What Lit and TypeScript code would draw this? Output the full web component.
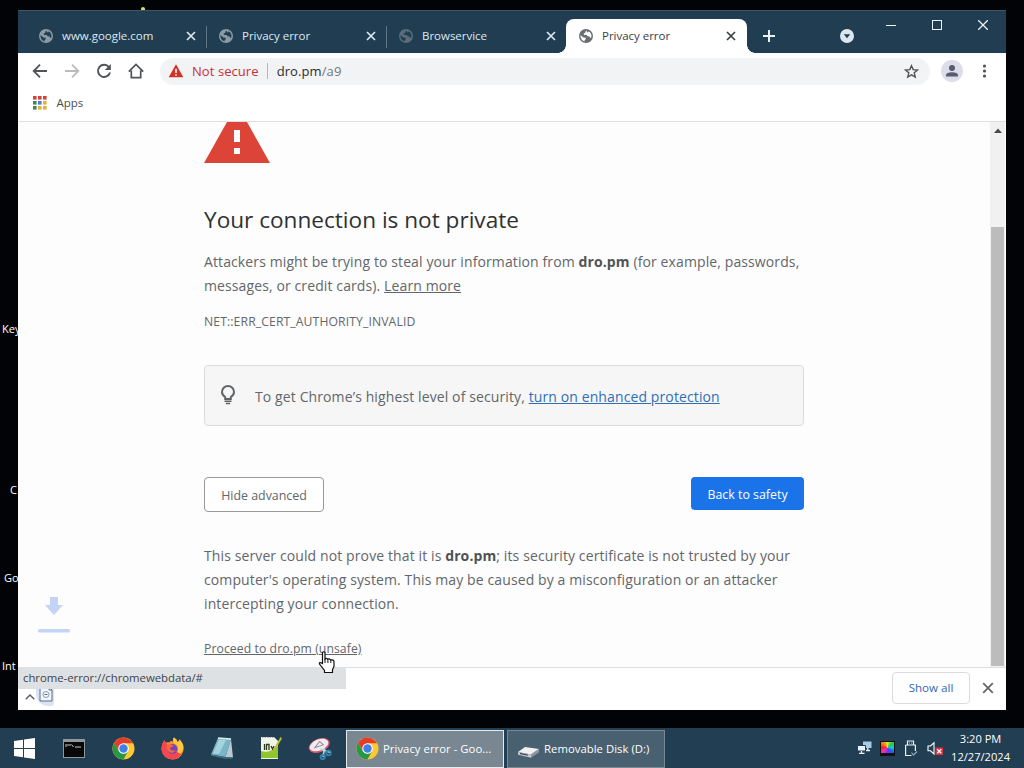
import { LitElement, html, css, svg } from "lit";
import { customElement, property } from "lit/decorators.js";

const globe = html`<svg width="14" height="14" viewBox="0 0 14 14">
  <circle cx="7" cy="7" r="7" fill="currentColor" />
  <path
    class="land"
    d="M7.6 1.5 L6.3 2.8 L6.3 4 L4.8 4.3 L4.8 5.7 L7.8 5.9 L8.6 7.3 L10.6 7.5 L11.3 9 L12.3 8.4 Q13.1 4.4 9.8 2.2 L9.2 3.2 L8 3.2 Z M1.4 6 L4.4 8.4 L6.6 8.7 L6.8 10.3 L5.6 10.9 L5.7 12.5 Q1.3 11.2 1.4 6 Z"
  />
</svg>`;

const chromeLogo = html`<svg width="23" height="23" viewBox="0 0 48 48">
  <circle cx="24" cy="24" r="23" fill="#fcc934" />
  <path d="M4.1 12.5 A23 23 0 0 1 43.9 13 L24 13 L14.5 18.5 L14.5 29.5 Z" fill="#e33b2e" />
  <path d="M4.1 12.5 L14.5 29.5 L24 35 L33.5 29.5 L24 47 A23 23 0 0 1 4.1 12.5 Z" fill="#279847" />
  <circle cx="24" cy="24" r="11" fill="#fff" />
  <circle cx="24" cy="24" r="8.8" fill="#3f7fe8" />
</svg>`;

const cross = (size: number, width: number) => html`<svg
  width=${size}
  height=${size}
  viewBox="0 0 10 10"
>
  <path
    d="M1 1 L9 9 M9 1 L1 9"
    stroke="currentColor"
    stroke-width=${width}
    fill="none"
  />
</svg>`;

@customElement("browser-tab")
class BrowserTab extends LitElement {
  @property() label = "";
  @property({ type: Boolean, reflect: true }) active = false;
  @property({ type: Boolean, reflect: true }) divider = false;
  @property({ type: Boolean, reflect: true }) loading = false;

  static styles = css`
    :host {
      display: flex;
      align-items: center;
      box-sizing: border-box;
      position: relative;
      width: 180px;
      height: 34px;
      padding: 0 10px 0 13px;
      color: #dbe9f1;
    }
    :host([active]) {
      width: 181px;
      padding-right: 11px;
      background: #fff;
      border-radius: 8px 8px 0 0;
      color: #3c4043;
    }
    /* the feet that flare out into the toolbar */
    :host([active])::before,
    :host([active])::after {
      content: "";
      position: absolute;
      bottom: 0;
      width: 8px;
      height: 8px;
    }
    :host([active])::before {
      left: -8px;
      background: radial-gradient(circle at 0 0, transparent 7.5px, #fff 8px);
    }
    :host([active])::after {
      right: -8px;
      background: radial-gradient(circle at 100% 0, transparent 7.5px, #fff 8px);
    }
    .icon {
      display: flex;
      color: #8b9aa3;
    }
    .land {
      fill: #213d51;
    }
    :host([loading]) .icon {
      color: #5b6d7a;
    }
    :host([active]) .icon {
      color: #6a6d71;
    }
    :host([active]) .land {
      fill: #fff;
    }
    .label {
      flex: 1;
      margin-left: 9px;
      padding-bottom: 2px;
      font-size: 11.5px;
      letter-spacing: -0.02px;
      white-space: nowrap;
    }
    .divider {
      position: absolute;
      right: -1px;
      top: 7px;
      width: 1px;
      height: 22px;
      background: #5f7584;
    }
  `;

  render() {
    return html`
      <span class="icon">${globe}</span>
      <span class="label">${this.label}</span>
      ${cross(10, 1.7)}
      ${this.divider ? html`<span class="divider"></span>` : null}
    `;
  }
}

@customElement("browser-toolbar")
class BrowserToolbar extends LitElement {
  static styles = css`
    :host {
      display: block;
      background: #fff;
      border-bottom: 1px solid #dcdee0;
    }
    svg {
      display: block;
    }
    .row {
      display: flex;
      align-items: center;
      height: 36px;
      padding: 0 12px 0 14px;
      color: #505357;
    }
    .nav {
      display: flex;
      gap: 16px;
    }
    .off {
      color: #b9bbbe;
    }
    .nav svg {
      width: 16px;
      height: 16px;
    }
    .omnibox {
      flex: 1;
      display: flex;
      align-items: center;
      box-sizing: border-box;
      height: 27px;
      margin: 0 11px 0 16px;
      padding: 0 11px 0 8px;
      border-radius: 14px;
      background: #f2f3f4;
      font-size: 13px;
    }
    .danger {
      margin-left: 8px;
      color: #c5303c;
      letter-spacing: 0.07px;
    }
    .bar {
      width: 1px;
      height: 16px;
      margin: 0 9px 0 8px;
      background: #b5b8bb;
    }
    .url {
      flex: 1;
      color: #2b2d30;
      letter-spacing: 0.1px;
    }
    .path {
      color: #74777b;
    }
    .avatar {
      margin-right: 13px;
    }
    .bookmarks {
      display: flex;
      align-items: center;
      gap: 10px;
      box-sizing: border-box;
      height: 32px;
      padding: 0 15px 5px 14.5px;
      font-size: 11.5px;
      color: #4a4d51;
    }
  `;

  render() {
    const colors = [
      "#d0453b", "#d0453b", "#d0453b",
      "#3e8a57", "#4a7fc9", "#e0b13c",
      "#3e8a57", "#e0b13c", "#e0b13c",
    ];
    return html`
      <div class="row">
        <div class="nav">
          <svg viewBox="0 0 16 16" fill="none" stroke="currentColor" stroke-width="1.8">
            <path d="M15 8 H2 M8 1.7 L1.7 8 L8 14.3" />
          </svg>
          <svg class="off" viewBox="0 0 16 16" fill="none" stroke="currentColor" stroke-width="1.8">
            <path d="M1 8 H14 M8 1.7 L14.3 8 L8 14.3" />
          </svg>
          <svg viewBox="0 0 16 16" fill="none" stroke="currentColor" stroke-width="1.9">
            <path d="M13 4.2 A6.1 6.1 0 1 0 14 9.5" />
            <path d="M14.8 1 V7 H8.8 Z" fill="currentColor" stroke="none" />
          </svg>
          <svg viewBox="0 0 16 16" fill="none" stroke="currentColor" stroke-width="1.7">
            <path d="M3.3 7.5 V14.6 H12.7 V7.5 M0.8 8.6 L8 1.4 L15.2 8.6" />
          </svg>
        </div>
        <div class="omnibox">
          <svg width="16" height="14" viewBox="0 0 16 14">
            <path d="M8 0.3 L15.3 13.3 H0.7 Z" fill="#d32f27" />
            <path d="M7.2 4.8 H8.8 V9 H7.2 Z M7.2 10.2 H8.8 V11.8 H7.2 Z" fill="#fff" />
          </svg>
          <span class="danger">Not secure</span>
          <span class="bar"></span>
          <span class="url">dro.pm<span class="path">/a9</span></span>
          <svg width="15" height="15" viewBox="0 0 16 16" fill="none" stroke="currentColor" stroke-width="1.5">
            <path d="M8 1.8 L9.8 6 L14.4 6.4 L10.9 9.4 L12 13.9 L8 11.5 L4 13.9 L5.1 9.4 L1.6 6.4 L6.2 6 Z" />
          </svg>
        </div>
        <svg class="avatar" width="22" height="22" viewBox="0 0 22 22">
          <circle cx="11" cy="11" r="11" fill="#dcdde8" />
          <circle cx="11" cy="8" r="3" fill="#595b70" />
          <path d="M5 16.5 V15 Q5.5 12.2 11 12.2 Q16.5 12.2 17 15 V16.5 Z" fill="#595b70" />
        </svg>
        <svg width="18" height="16" viewBox="0 0 18 16" fill="currentColor">
          <circle cx="8.5" cy="3" r="1.6" />
          <circle cx="8.5" cy="8" r="1.6" />
          <circle cx="8.5" cy="13" r="1.6" />
        </svg>
      </div>
      <div class="bookmarks">
        <svg width="14" height="14" viewBox="0 0 14 14">
          ${colors.map(
            (c, i) => svg`<rect x=${(i % 3) * 5} y=${Math.floor(i / 3) * 5} width="3.6" height="3.6" fill=${c} />`
          )}
        </svg>
        <span>Apps</span>
      </div>
    `;
  }
}

@customElement("privacy-error")
class PrivacyError extends LitElement {
  static styles = css`
    :host {
      display: flex;
      height: 545px;
      background: #fdfdfd;
      color: #63666a;
    }
    svg {
      display: block;
    }
    .page {
      flex: 1;
      display: flex;
      justify-content: center;
    }
    .content {
      width: 600px;
      white-space: nowrap;
    }
    h1 {
      margin: 40px 0 13px;
      font-size: 22.6px;
      line-height: 34px;
      font-weight: 400;
      color: #2f3134;
    }
    p {
      margin: 0;
      font-size: 14px;
      line-height: 24px;
      letter-spacing: 0.11px;
    }
    b {
      font-weight: 700;
      color: #505255;
    }
    .link {
      text-decoration: underline;
    }
    .code {
      margin-top: 14px;
      font-size: 12.2px;
      line-height: 20px;
    }
    .promo {
      display: flex;
      align-items: center;
      box-sizing: border-box;
      height: 61px;
      margin-top: 33px;
      padding: 1px 16px 0;
      border: 1px solid #dadce0;
      border-radius: 4px;
      background: #f6f6f7;
      font-size: 14px;
      letter-spacing: 0.11px;
    }
    .promo svg {
      margin: -3px 18px 0 -1px;
    }
    .tip {
      margin-left: 1px;
    }
    .blue {
      color: #2f6fb8;
      text-decoration: underline;
    }
    .buttons {
      display: flex;
      align-items: flex-start;
      justify-content: space-between;
      margin: 51px 0 32px;
    }
    .btn {
      display: flex;
      align-items: center;
      justify-content: center;
      box-sizing: border-box;
      border-radius: 4px;
      font-size: 12.4px;
    }
    .hide {
      width: 120px;
      height: 35px;
      padding-top: 1px;
      border: 1px solid #97999c;
      background: #fff;
    }
    .back {
      width: 113px;
      height: 33px;
      padding-top: 1px;
      background: #1a73e8;
      color: #fff;
    }
    .proceed {
      margin-top: 21px;
      font-size: 12.2px;
      letter-spacing: 0.09px;
    }
    .scrollbar {
      box-sizing: border-box;
      width: 16px;
      padding: 6px 2px 0;
      background: #f1f1f1;
      border-right: 1px solid #fff;
    }
    .thumb {
      height: 439px;
      margin: 94px -1px 0;
      background: #bcbcbc;
    }
    .scrollbar svg {
      margin: 0 auto;
    }
  `;

  render() {
    return html`
      <div class="page">
        <div class="content">
          <svg width="66" height="41" viewBox="0 0 66 41">
            <path d="M23 0 H43 L66 41 H0 Z" fill="#db4437" />
            <path d="M30 8 H36 V20 H30 Z M30 26 H36 V32 H30 Z" fill="#fff" />
          </svg>
          <h1>Your connection is not private</h1>
          <p>
            Attackers might be trying to steal your information from
            <b>dro.pm</b> (for example, passwords,<br />messages, or credit
            cards). <span class="link">Learn more</span>
          </p>
          <p class="code">NET::ERR_CERT_AUTHORITY_INVALID</p>
          <div class="promo">
            <svg width="16" height="20" viewBox="0 0 16 20" fill="none" stroke="#606468" stroke-width="2">
              <path d="M5.2 14 V12 Q2 10.2 2 7 A6 6 0 0 1 14 7 Q14 10.2 10.8 12 V14 Z" />
              <path d="M4.5 16.2 H11.5 M5.8 18.6 H10.2" stroke-width="1.5" />
            </svg>
            <span class="tip">To get Chrome’s highest level of security, <span class="blue">turn on enhanced protection</span></span>
          </div>
          <div class="buttons">
            <span class="btn hide">Hide advanced</span>
            <span class="btn back">Back to safety</span>
          </div>
          <p>
            This server could not prove that it is <b>dro.pm</b>; its security
            certificate is not trusted by your<br />computer's operating system.
            This may be caused by a misconfiguration or an attacker<br />intercepting
            your connection.
          </p>
          <p class="proceed"><span class="link">Proceed to dro.pm (unsafe)</span></p>
        </div>
      </div>
      <div class="scrollbar">
        <svg width="8" height="5" viewBox="0 0 8 5"><path d="M0 5 L4 0.5 L8 5 Z" fill="#4a4a4a" /></svg>
        <div class="thumb"></div>
      </div>
    `;
  }
}

@customElement("task-bar")
class TaskBar extends LitElement {
  static styles = css`
    :host {
      display: flex;
      align-items: center;
      height: 40px;
      background: #213e53;
      color: #fff;
      font-size: 11.3px;
      white-space: nowrap;
    }
    svg {
      display: block;
    }
    .pinned {
      display: flex;
      width: 346px;
    }
    .pin {
      display: flex;
      align-items: center;
      justify-content: center;
      width: 49.3px;
    }
    .task {
      display: flex;
      align-items: center;
      box-sizing: border-box;
      gap: 4px;
      width: 158px;
      height: 38px;
      margin: 1px 3px 0 0;
      padding-left: 9px;
      border: 1px solid #768995;
      background: #486070;
    }
    .task.current {
      border-color: #e6eaed;
      background: #788791;
    }
    .name {
      padding-bottom: 1px;
      letter-spacing: 0.04px;
    }
    .disk {
      margin-top: 5px;
    }
    .tray {
      display: flex;
      align-items: center;
      gap: 8px;
      margin-left: auto;
      margin-right: 14px;
    }
    .screen {
      width: 13px;
      height: 11px;
      border: 1px solid #111;
      border-bottom-width: 3px;
      background: conic-gradient(
        from 0deg,
        #e8e820,
        #20d040,
        #18c8d8,
        #2858f0,
        #8030f0,
        #f030c0,
        #f02828,
        #f08820,
        #e8e820
      );
    }
    .clock {
      font-size: 11.1px;
      text-align: center;
      line-height: 18px;
    }
  `;

  render() {
    return html`
      <div class="pinned">
        <span class="pin">
          <svg width="21" height="21" viewBox="0 0 21 21" fill="#fff">
            <path d="M0 3 L9 1.7 V10 H0 Z M10 1.5 L21 0 V10 H10 Z M0 11 H9 V19.3 L0 18 Z M10 11 H21 V21 L10 19.5 Z" />
          </svg>
        </span>
        <span class="pin">
          <svg width="22" height="19" viewBox="0 0 22 19">
            <rect width="22" height="19" fill="#8f979b" />
            <rect x="1" y="3" width="20" height="15" fill="#080808" />
            <path d="M3 5 V8 M5 5 V7 M7 5 V7 M8.5 5.5 L10.5 8 M12 8 H18" stroke="#c8c8c8" stroke-width="1" />
          </svg>
        </span>
        <span class="pin">${chromeLogo}</span>
        <span class="pin">
          <svg width="23" height="23" viewBox="0 0 23 23">
            <path d="M13 0.5 Q16 2 16.5 5 Q18.5 4.5 18.3 2.2 Q24.5 8 22 15 Q19 22.5 11.5 22.5 Q2.5 22 0.7 13.5 Q-0.2 7.5 3.6 3 Q3.8 5 5.2 5.6 Q7 5 8.5 5.2 Q9.8 3.3 12 4.5 Q11.5 2 13 0.5 Z" fill="#fb8b2c" />
            <path d="M3.6 3 Q3.8 5 5.2 5.6 L7 9 L10 12 L20 17 Q17 22.5 11.5 22.5 Q2.5 22 0.7 13.5 Q-0.2 7.5 3.6 3 Z" fill="#f4474f" />
            <path d="M13 0.5 Q16 2 16.5 5 Q18.5 4.5 18.3 2.2 Q24 8 21.5 14 Q19 18 16.5 15 Q19 9 12.5 6 Q11.3 2 13 0.5 Z" fill="#ffc83d" />
            <circle cx="11.5" cy="12" r="4.9" fill="#7146be" />
            <path d="M5.5 8.5 Q9 6 12.5 8.5 Q12 10 9.5 10.2 L9 12 Q11 14.5 15 13 Q12 18 7.5 14.5 Q5 12 5.5 8.5 Z" fill="#f5673a" />
          </svg>
        </span>
        <span class="pin">
          <svg width="24" height="22" viewBox="0 0 24 22">
            <path d="M8 1 L21 2 L15.5 20 L1 17.5 Z" fill="#78b5c6" />
            <path d="M9 2.5 L16 3 L9 17 L3 16.5 Z" fill="#a5d2dc" />
            <path d="M21 2 L23 20.5 L15.5 20 Z" fill="#b8cbd0" />
            <path d="M1 17.5 L15.5 20 L23 20.5 L22 21.7 L14 21.5 L1 18.8 Z" fill="#3f7183" />
            <path d="M8 1 L21 2" stroke="#d9edf0" stroke-width="1.5" />
          </svg>
        </span>
        <span class="pin">
          <svg width="22" height="24" viewBox="0 0 22 24">
            <path d="M1 1 H14 L18 5 V23 H1 Z" fill="#f1f5e9" />
            <path d="M1 15 Q9 18 18 10 V22 H1 Z" fill="#8fc62c" />
            <path d="M4.5 8 V14 M6.5 14 V8.5 H9 V14 M11 10 L12.5 13 L14 10" stroke="#2d3a1a" stroke-width="1.3" fill="none" />
            <path d="M20.5 1 L13 14 L11.5 17 L14.5 15 L22 2.5 Z" fill="#b9bc2b" />
            <path d="M2 1.5 H14" stroke="#a5b1ad" stroke-dasharray="1.5 1" />
          </svg>
        </span>
        <span class="pin">
          <svg width="24" height="23" viewBox="0 0 24 23">
            <g transform="rotate(-22 11 8)">
              <ellipse cx="11" cy="8.5" rx="11" ry="6.8" fill="#d95771" />
              <ellipse cx="11" cy="8" rx="9.7" ry="5.6" fill="#f4e9ec" />
              <path d="M6 9 L13 5 L15 9.5 Z" fill="none" stroke="#809098" />
            </g>
            <path d="M12 12 L22.5 15.5 M16.5 11 L15 20" stroke="#bdd7e0" stroke-width="1.6" />
            <circle cx="20.5" cy="16" r="2.3" fill="none" stroke="#3384ad" stroke-width="1.8" />
            <circle cx="14.7" cy="20" r="2.2" fill="none" stroke="#3384ad" stroke-width="1.8" />
          </svg>
        </span>
      </div>
      <div class="task current">${chromeLogo}<span class="name">Privacy error - Goo...</span></div>
      <div class="task">
        <svg class="disk" width="23" height="14" viewBox="0 0 23 14">
          <path d="M1 8 L8 3 L22 5 L14 10.5 Z" fill="#eef0f1" />
          <path d="M1 8 L14 10.5 V13.8 L1 10.8 Z" fill="#c3c9cc" />
          <path d="M14 10.5 L22 5 V8.3 L14 13.8 Z" fill="#8e989e" />
          <path d="M3 9.5 L11 11.2" stroke="#4b555b" stroke-width="1.3" />
        </svg>
        <span class="name">Removable Disk (D:)</span>
      </div>
      <div class="tray">
        <svg width="15" height="14" viewBox="0 0 15 14">
          <path d="M6 0.5 H14.5 V7 H6 Z" fill="#a6cde6" />
          <path d="M0.5 4.5 H8.5 V10 H0.5 Z" fill="#e8f2f8" stroke="#213e53" />
          <path d="M2 12.3 H7.5 M4.5 10 V12 M10.8 7 V9.5 M9 9.5 H13" stroke="#e8f2f8" stroke-width="1.3" />
        </svg>
        <span class="screen"></span>
        <svg width="16" height="17" viewBox="0 0 16 17" fill="none" stroke="#e9eff3" stroke-width="1.2">
          <path d="M4.5 5 V1 H10.5 V5 M2.6 5 H12.4 V11 M2.6 5 V15.5 H8.5" />
          <path d="M6 3 H6.8 M8.3 3 H9.1" />
          <path d="M8.5 12.5 L10.5 15 L14 11.5" stroke="#8fa7b6" />
        </svg>
        <svg width="16" height="15" viewBox="0 0 16 15">
          <path d="M1 5 H3.5 L7 1.8 V13 L3.5 9.8 H1 Z" fill="none" stroke="#fff" stroke-width="1.1" />
          <rect x="8.5" y="6.5" width="7.5" height="7.5" fill="#dc3340" />
          <path d="M10.2 8.2 L14.3 12.3 M14.3 8.2 L10.2 12.3" stroke="#fff" stroke-width="1.3" />
        </svg>
        <div class="clock">3:20 PM<br />12/27/2024</div>
      </div>
    `;
  }
}

@customElement("app-root")
class AppRoot extends LitElement {
  static styles = css`
    :host {
      display: flex;
      flex-direction: column;
      width: 1024px;
      height: 768px;
      overflow: hidden;
      font-family: "Open Sans", "Noto Sans", sans-serif;
    }
    svg {
      display: block;
    }
    .desktop {
      position: relative;
      flex: 1;
      overflow: hidden;
      background: #020307;
    }
    .shortcut {
      position: absolute;
      left: 2px;
      color: #fff;
      font-size: 11px;
      line-height: 16px;
    }
    .s1 {
      top: 321px;
    }
    .s2 {
      top: 482px;
      left: 10px;
    }
    .s3 {
      top: 570px;
      left: 4px;
    }
    .s4 {
      top: 658px;
    }
    .spark {
      position: absolute;
      left: 141px;
      top: 7px;
      width: 4px;
      height: 4px;
      border-radius: 50% 50% 0 0;
      background: #d9dc6c;
    }
    .window {
      position: absolute;
      left: 18px;
      top: 10px;
      display: flex;
      flex-direction: column;
      width: 988px;
      height: 700px;
      background: #fff;
    }
    .tabs {
      display: flex;
      box-sizing: border-box;
      height: 43px;
      padding: 8px 18px 0 8px;
      border-top: 1px solid #3c5768;
      background: #213d51;
      color: #e9f2f6;
    }
    .plus {
      margin: 11px 0 0 16px;
    }
    .search {
      margin: 10px 32px 0 auto;
    }
    .controls {
      display: flex;
      gap: 36px;
      margin-top: 1px;
    }
    .shelf {
      display: flex;
      align-items: center;
      box-sizing: border-box;
      height: 43px;
      padding: 0 12px 2px 7px;
      border-top: 1px solid #dcdee0;
      color: #5f6368;
    }
    .file {
      display: flex;
      align-items: center;
      margin: 16px auto 0 0;
    }
    .chip {
      margin-left: 1px;
      padding: 0 1px 4px 3px;
      background: #dbe4f5;
      border-radius: 3px 3px 3px 12px;
    }
    .show {
      display: flex;
      align-items: center;
      justify-content: center;
      box-sizing: border-box;
      width: 78px;
      height: 32px;
      margin-right: 12px;
      padding-bottom: 1px;
      border: 1px solid #dadce0;
      border-radius: 4px;
      color: #3367b5;
      font-size: 11.6px;
    }
    .status {
      position: absolute;
      left: 0;
      bottom: 21px;
      box-sizing: border-box;
      width: 328px;
      height: 22px;
      padding-left: 5px;
      border-radius: 0 3px 0 0;
      background: #dee1e3;
      color: #404347;
      font-size: 11.4px;
      letter-spacing: -0.05px;
      line-height: 22px;
    }
    .download {
      position: absolute;
      left: 20px;
      top: 587px;
    }
    .cursor {
      position: absolute;
      left: 300px;
      top: 641px;
    }
  `;

  render() {
    return html`
      <div class="desktop">
        <span class="spark"></span>
        <span class="shortcut s1">Key</span>
        <span class="shortcut s2">C</span>
        <span class="shortcut s3">Go</span>
        <span class="shortcut s4">Int</span>
        <div class="window">
          <div class="tabs">
            <browser-tab label="www.google.com" divider></browser-tab>
            <browser-tab label="Privacy error" divider></browser-tab>
            <browser-tab label="Browservice" loading></browser-tab>
            <browser-tab label="Privacy error" active></browser-tab>
            <svg class="plus" width="12" height="12" viewBox="0 0 12 12">
              <path d="M6 0 V12 M0 6 H12" stroke="currentColor" stroke-width="2" />
            </svg>
            <svg class="search" width="14" height="14" viewBox="0 0 14 14">
              <circle cx="7" cy="7" r="7" fill="#dbe7ee" />
              <path d="M3.8 5.2 H10.2 L7 9.2 Z" fill="#213d51" />
            </svg>
            <div class="controls">
              <svg width="10" height="10"><path d="M0 5.5 H10" stroke="currentColor" /></svg>
              <svg width="10" height="10"><rect x="0.5" y="0.5" width="9" height="9" fill="none" stroke="currentColor" /></svg>
              <svg width="10" height="10"><path d="M0 0 L10 10 M10 0 L0 10" stroke="currentColor" stroke-width="1.3" /></svg>
            </div>
          </div>
          <browser-toolbar></browser-toolbar>
          <privacy-error></privacy-error>
          <div class="shelf">
            <div class="file">
              <svg width="10" height="7" viewBox="0 0 10 7"><path d="M0.7 6.3 L5 2 L9.3 6.3" fill="none" stroke="currentColor" stroke-width="1.5" /></svg>
              <span class="chip">
                <svg width="14" height="16" viewBox="0 0 14 16">
                  <path d="M1 1 H10 L13 4 V15 H1 Z" fill="#f2f5f9" stroke="#5b6e82" />
                  <circle cx="7" cy="8.5" r="3" fill="none" stroke="#8a9bb0" />
                  <path d="M5.5 8.5 H8.5 M10 1 V4 H13" stroke="#5b6e82" fill="none" />
                </svg>
              </span>
            </div>
            <span class="show">Show all</span>
            ${cross(12, 1.4)}
          </div>
          <svg class="download" width="32" height="37" viewBox="0 0 32 37" fill="#c3d4f6">
            <path d="M12 0 H20 V8 H25 L16 18 L7 8 H12 Z" />
            <rect y="32" width="32" height="3.5" rx="1.5" />
          </svg>
          <div class="status">chrome-error://chromewebdata/#</div>
          <svg class="cursor" width="18" height="23" viewBox="0 0 18 23">
            <path
              d="M4.5 1.5 Q6 0 7 1.5 V8 Q8.5 6.8 9.8 8.3 Q11.2 7.3 12.6 8.9 Q15.8 8.3 16 11 V15.5 L14.5 18.5 V21.5 H6.5 V19.5 L1.5 13 Q1 10.5 4.5 12.5 Z"
              fill="#fff"
              stroke="#111"
              stroke-width="1.2"
            />
            <path d="M7 8 V12 M9.9 8.5 V12 M12.8 9 V12" stroke="#111" />
          </svg>
        </div>
      </div>
      <task-bar></task-bar>
    `;
  }
}
